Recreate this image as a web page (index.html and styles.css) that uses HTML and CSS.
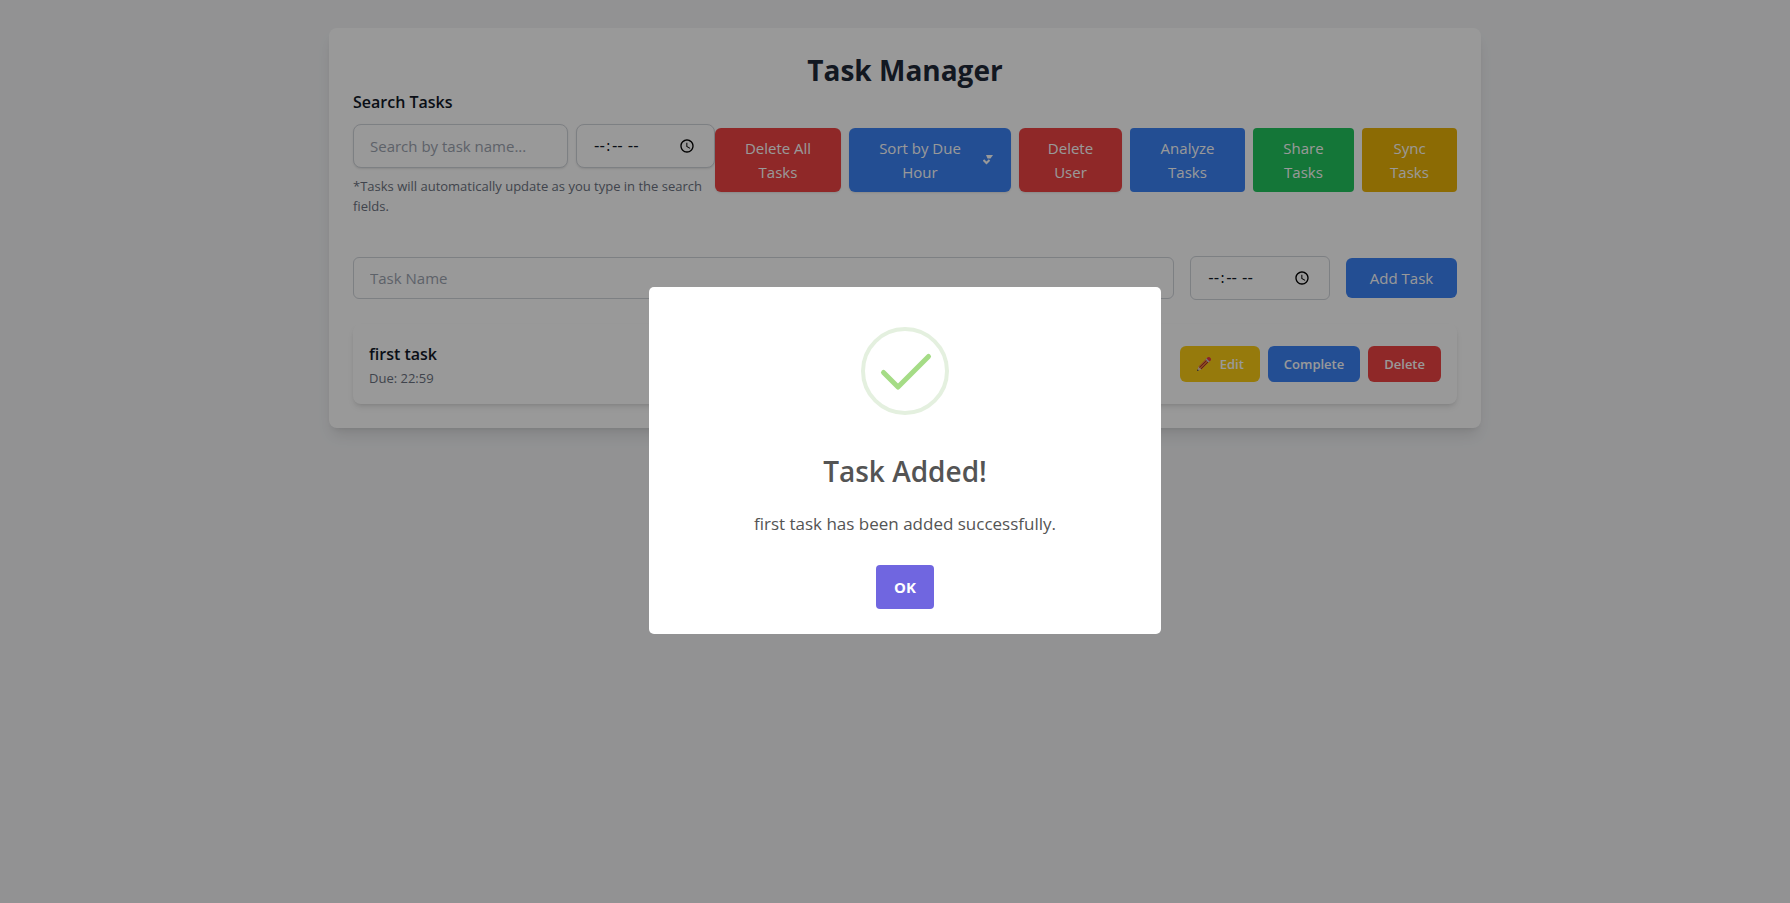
FILE: index.html
```
<!DOCTYPE html>
<html lang="en">
<head>
    <meta charset="UTF-8">
    <meta name="viewport" content="width=device-width, initial-scale=1.0">
    <title>Task Manager</title>
    <link rel="stylesheet" href="styles.css">
</head>
<body>
    <main class="card">
        <h1>Task Manager</h1>

        <div class="toolbar">
            <div class="search">
                <h2>Search Tasks</h2>
                <div class="search-fields">
                    <input type="text" class="field raised" placeholder="Search by task name..." aria-label="Search by task name">
                    <input type="time" class="field raised time" aria-label="Search by due hour">
                </div>
                <p class="hint">*Tasks will automatically update as you type in the search fields.</p>
            </div>

            <div class="actions">
                <button type="button" class="btn red raised">Delete All Tasks</button>
                <button type="button" class="btn blue raised sort">
                    <span>Sort by Due Hour</span>
                    <svg width="10" height="10" viewBox="0 0 10 10" fill="none">
                        <path d="M3 0h7L7.5 3.5h-3z" fill="#fff"/>
                        <path d="M0.5 5L3.5 8L6.5 5" stroke="#fff" stroke-width="2"/>
                    </svg>
                </button>
                <button type="button" class="btn red raised">Delete User</button>
                <button type="button" class="btn blue square">Analyze Tasks</button>
                <button type="button" class="btn green square">Share Tasks</button>
                <button type="button" class="btn amber square">Sync Tasks</button>
            </div>
        </div>

        <form class="add-form">
            <input type="text" class="field name" placeholder="Task Name" aria-label="Task Name">
            <input type="time" class="field time" aria-label="Due hour">
            <button type="button" class="btn blue add">Add Task</button>
        </form>

        <ul class="tasks">
            <li class="task">
                <div>
                    <h3>first task</h3>
                    <p>Due: 22:59</p>
                </div>
                <div class="task-actions">
                    <button type="button" class="btn small yellow">
                        <svg width="16" height="16" viewBox="0 0 16 16">
                            <path d="M1 15l1.5-4.5l3 3z" fill="#e8c9b0"/>
                            <path d="M1 15l.6-1.8l1.2 1.2z" fill="#333"/>
                            <path d="M2.5 10.5L10 3l3 3l-7.500 7.500z" fill="#e8793a"/>
                            <path d="M3.500 11.500L11 4M5 13L12.500 5.500" stroke="#a8372a" stroke-width="1"/>
                            <path d="M9.500 3.500l1.500-1.500l3 3l-1.500 1.500z" fill="#c9c9d4"/>
                            <path d="M10.500 2.500l1.200-1.200q1-.8 2 0l1 1q.8 1 0 2l-1.200 1.200z" fill="#e83b45"/>
                        </svg>
                        Edit
                    </button>
                    <button type="button" class="btn small blue">Complete</button>
                    <button type="button" class="btn small red">Delete</button>
                </div>
            </li>
        </ul>
    </main>

    <div class="overlay">
        <div class="modal" role="dialog" aria-modal="true" aria-labelledby="modal-title">
            <svg class="modal-icon" width="88" height="88" viewBox="0 0 88 88" fill="none">
                <circle cx="44" cy="44" r="42" stroke="#e4f0df" stroke-width="4"/>
                <path d="M22.500 45.500L37 60L67.500 29.500" stroke="#a5dc86" stroke-width="5" stroke-linecap="round" stroke-linejoin="round"/>
            </svg>
            <h2 id="modal-title">Task Added!</h2>
            <p>first task has been added successfully.</p>
            <button type="button" class="ok">OK</button>
        </div>
    </div>
</body>
</html>
```

FILE: styles.css
```
* {
    box-sizing: border-box;
    margin: 0;
    padding: 0;
}

body {
    min-height: 100vh;
    padding: 28px 0 0 20px;
    background: #f3f4f6;
    color: #111827;
    font: 15px/24px "Segoe UI", "Open Sans", "Noto Sans", sans-serif;
}

input, button {
    font: inherit;
    color: inherit;
}

/* main card */
.card {
    max-width: 1152px;
    margin: 0 auto;
    padding: 24px;
    background: #fff;
    border-radius: 8px;
    box-shadow: 0 10px 15px -3px rgba(0, 0, 0, .1), 0 4px 6px -4px rgba(0, 0, 0, .1);
}

h1 {
    font-size: 28px;
    font-weight: 700;
    line-height: 36px;
    text-align: center;
    color: #1f2937;
}

.toolbar {
    display: flex;
    align-items: center;
    margin-bottom: 24px;
}

.search {
    flex: 0 0 362px;
    min-width: 0;
    padding-bottom: 16px;
}

.search h2 {
    margin-bottom: 8px;
    font-size: 16px;
    font-weight: 600;
    line-height: 28px;
}

.search-fields {
    display: flex;
    gap: 8px;
    margin-bottom: 8px;
}

.search-fields .field {
    flex: 1;
    min-width: 0;
    border-radius: 8px;
}

.field {
    height: 42px;
    padding: 8px 16px;
    background: #fff;
    border: 1px solid #d1d5db;
    border-radius: 6px;
}

.field::placeholder {
    color: #9ca3af;
}

.field.time, .search-fields .field {
    height: 44px;
}

.field.time, .search-fields .time {
    flex: 0 0 139px;
}

.time {
    font-family: "Segoe UI", "DejaVu Sans", sans-serif;
}

.raised {
    box-shadow: 0 1px 2px rgba(0, 0, 0, .1);
}

.hint {
    font-size: 13px;
    line-height: 20px;
    color: #6b7280;
}

/* buttons */
.actions {
    flex: 1;
    display: grid;
    grid-template-columns: 126fr 162fr 103fr 115fr 101fr 95fr;
    gap: 8px;
}

.btn {
    padding: 8px 24px;
    border: 0;
    border-radius: 6px;
    color: #fff;
    cursor: pointer;
}

.square { border-radius: 4px; }
.sort {
    display: flex;
    align-items: center;
    gap: 16px;
    padding: 8px 18px 8px 24px;
}
.sort span { flex: 1; }

.red { background: #ef4444; }
.blue { background: #3b82f6; }
.green { background: #22c55e; }
.amber { background: #eab308; }
.yellow { background: #facc15; }

/* new task */
.add-form {
    display: flex;
    align-items: center;
    gap: 16px;
    margin-bottom: 24px;
}

.name { flex: 1; }
.add {
    flex: 0 0 111px;
    padding: 8px 16px;
}

/* task list */
.tasks {
    list-style: none;
}

.task {
    display: flex;
    justify-content: space-between;
    align-items: center;
    padding: 16px;
    border-radius: 8px;
    box-shadow: 0 4px 6px -1px rgba(0, 0, 0, .1), 0 2px 4px -2px rgba(0, 0, 0, .1);
}

.task h3 {
    font-size: 16px;
    font-weight: 600;
    line-height: 28px;
}

.task p {
    font-size: 13px;
    line-height: 20px;
    color: #6b7280;
}

.task-actions {
    display: flex;
    gap: 8px;
}

.small {
    display: flex;
    align-items: center;
    gap: 8px;
    padding: 8px 16px;
    font-size: 13px;
    font-weight: 600;
    line-height: 20px;
}

/* alert */
.overlay {
    position: fixed;
    inset: 0;
    display: flex;
    justify-content: center;
    align-items: center;
    padding: 18px 0 0 20px;
    background: rgba(0, 0, 0, .4);
}

.modal {
    width: 512px;
    padding: 40px 24px 25px;
    background: #fff;
    border-radius: 5px;
    color: #545454;
    text-align: center;
}

.modal-icon {
    display: block;
    margin: 0 auto 34px;
}

.modal h2 {
    margin-bottom: 16px;
    font-size: 28px;
    font-weight: 600;
    line-height: 45px;
}

.modal p {
    margin-bottom: 28px;
    font-size: 17px;
    line-height: 27px;
}

.ok {
    display: block;
    margin: 0 auto;
    padding: 10px 18px;
    background: #7066e0;
    border: 0;
    border-radius: 4px;
    color: #fff;
    font-weight: 700;
    cursor: pointer;
}
```
